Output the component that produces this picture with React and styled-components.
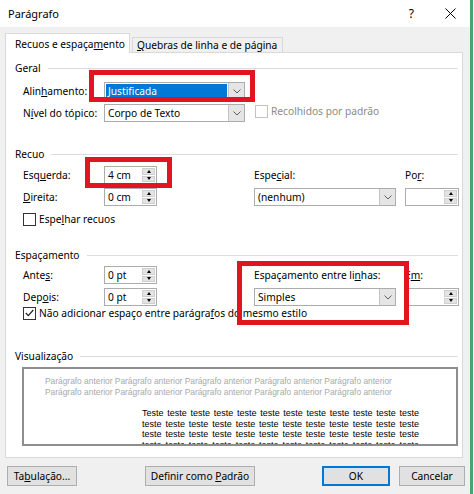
import React from 'react';
import styled, { createGlobalStyle } from 'styled-components';

const GlobalStyle = createGlobalStyle`
  html, body {
    margin: 0;
    padding: 0;
    background: #fff;
  }
  body {
    font-family: "Noto Sans", "Open Sans", sans-serif;
    font-size: 10.2px;
    color: #000;
  }
`;

const Window = styled.div`
  position: relative;
  width: 470px;
  height: 494px;
  background: #f0f0f0;
  border-right: 3px solid #4ea36a;
  display: flex;
  flex-direction: column;
  overflow: hidden;
`;

const TitleBar = styled.div`
  height: 27px;
  flex: none;
  background: #fff;
  display: flex;
  align-items: center;
  padding-left: 8px;
`;

const TitleText = styled.div`
  flex: 1;
  font-size: 11px;
`;

const HelpButton = styled.span`
  font-size: 12px;
  margin-right: 31px;
`;

const CloseButton = styled.span`
  display: flex;
  margin-right: 14px;
`;

const Body = styled.div`
  padding: 6px 0 0 5px;
  display: flex;
  flex-direction: column;
`;

const TabList = styled.div`
  display: flex;
  align-items: flex-end;
  height: 20px;
  margin-bottom: -1px;
  position: relative;
  z-index: 1;
`;

const Tab = styled.div`
  box-sizing: border-box;
  width: ${(p) => p.$width}px;
  height: ${(p) => (p.$active ? 20 : 15)}px;
  margin-bottom: ${(p) => (p.$active ? 0 : 1)}px;
  margin-left: ${(p) => (p.$active ? 0 : 2)}px;
  padding-left: ${(p) => (p.$active ? 9 : 4)}px;
  background: ${(p) => (p.$active ? '#fff' : '#f0f0f0')};
  border: 1px solid #d9d9d9;
  border-bottom: none;
  display: flex;
  align-items: center;
  white-space: nowrap;
`;

const Panel = styled.div`
  box-sizing: border-box;
  width: 458px;
  height: 406px;
  background: #fff;
  border: 1px solid #d9d9d9;
  padding: 8px 4px 0 9px;
`;

const SectionHeader = styled.div`
  display: flex;
  align-items: center;
  height: 14px;
  margin-top: ${(p) => p.$top || 0}px;

  &::after {
    content: '';
    flex: 1;
    height: 1px;
    background: #dcdcdc;
    margin-left: 7px;
  }
`;

const GeneralGrid = styled.div`
  display: grid;
  grid-template-columns: 81px 141px auto;
  grid-auto-rows: 18px;
  row-gap: 4px;
  margin: 7px 0 0 8px;
`;

const FormGrid = styled.div`
  display: grid;
  grid-template-columns: 81px 53px 97px 142px 9px 54px;
  grid-auto-rows: 18px;
  row-gap: 4px;
  margin: ${(p) => p.$top}px 0 0 8px;
`;

const FieldLabel = styled.span`
  display: flex;
  align-items: center;
  white-space: nowrap;
  grid-column: ${(p) => p.$col || 'auto'};
`;

const Key = styled.span`
  text-decoration: underline;
  text-underline-offset: 1px;
`;

const SelectBox = styled.div`
  box-sizing: border-box;
  height: 18px;
  border: 1px solid #acacac;
  background: #fff;
  display: flex;
  grid-column: ${(p) => p.$col || 'auto'};
`;

const SelectValue = styled.div`
  flex: 1;
  display: flex;
  align-items: center;
  margin: 1px;
  padding-left: 2px;
  background: ${(p) => (p.$selected ? '#0078d7' : 'transparent')};
  color: ${(p) => (p.$selected ? '#fff' : '#000')};
`;

const DropButton = styled.div`
  width: 15px;
  background: #e5e5e5;
  border-left: 1px solid #c4c4c4;
  display: flex;
  align-items: center;
  justify-content: center;
`;

const SpinBox = styled.div`
  box-sizing: border-box;
  height: 18px;
  border: 1px solid #acacac;
  background: #fff;
  display: flex;
  grid-column: ${(p) => p.$col || 'auto'};
`;

const SpinValue = styled.div`
  flex: 1;
  display: flex;
  align-items: center;
  padding-left: 3px;
`;

const SpinButtons = styled.div`
  width: 13px;
  padding: 1px;
  display: flex;
  flex-direction: column;
  gap: 1px;
`;

const SpinButton = styled.div`
  flex: 1;
  background: #e3e3e3;
  border: 1px solid #cfcfcf;
  display: flex;
  align-items: center;
  justify-content: center;

  &::before {
    content: '';
    border-left: 2.5px solid transparent;
    border-right: 2.5px solid transparent;
    ${(p) => (p.$down ? 'border-top' : 'border-bottom')}: 3px solid #000;
  }
`;

const CheckRow = styled.label`
  display: flex;
  align-items: center;
  gap: 3px;
  height: 14px;
  white-space: nowrap;
  margin: ${(p) => p.$top || 0}px 0 0 ${(p) => p.$left || 0}px;
  color: ${(p) => (p.$disabled ? '#8a8a8a' : '#000')};
`;

const CheckBox = styled.span`
  box-sizing: border-box;
  width: 13px;
  height: 13px;
  background: #fff;
  border: 1px solid ${(p) => (p.$disabled ? '#c3c3c3' : '#333')};
  display: flex;
  align-items: center;
  justify-content: center;
`;

const Preview = styled.div`
  box-sizing: border-box;
  width: 436px;
  height: 79px;
  margin: 4px 0 0 7px;
  border: 2px solid #8e8e8e;
  background: #fff;
  overflow: hidden;
  padding-top: 7px;
  font-family: "Liberation Sans", Arial, sans-serif;
`;

const PrevParagraph = styled.p`
  margin: 0;
  padding: 0 60px 0 21px;
  font-size: 8.4px;
  line-height: 11px;
  color: #a9a9a9;
`;

const CurrentParagraph = styled.p`
  margin: 10px 0 0;
  padding: 0 37px 0 118px;
  font-size: 9px;
  line-height: 10.5px;
  text-align: justify;
  color: #000;
`;

const ButtonBar = styled.div`
  display: flex;
  margin: 8px 0 0 2px;
`;

const Button = styled.button`
  box-sizing: border-box;
  width: ${(p) => p.$width}px;
  height: 20px;
  margin-left: ${(p) => p.$gap || 0}px;
  padding: 0;
  background: #e1e1e1;
  border: ${(p) => (p.$primary ? '2px solid #0078d7' : '1px solid #adadad')};
  font-family: inherit;
  font-size: 10.2px;
  color: #000;
`;

const Highlight = styled.div`
  position: absolute;
  left: ${(p) => p.$x}px;
  top: ${(p) => p.$y}px;
  width: ${(p) => p.$w}px;
  height: ${(p) => p.$h}px;
  box-sizing: border-box;
  border: 5px solid #e2141f;
  pointer-events: none;
`;

const Chevron = () => (
  <svg width="8" height="5" viewBox="0 0 8 5">
    <path d="M0.5 0.5 L4 4 L7.5 0.5" fill="none" stroke="#606060" strokeWidth="1" />
  </svg>
);

const Select = ({ value, selected, col }) => (
  <SelectBox $col={col}>
    <SelectValue $selected={selected}>{value}</SelectValue>
    <DropButton>
      <Chevron />
    </DropButton>
  </SelectBox>
);

const Spin = ({ value, col }) => (
  <SpinBox $col={col}>
    <SpinValue>{value}</SpinValue>
    <SpinButtons>
      <SpinButton />
      <SpinButton $down />
    </SpinButtons>
  </SpinBox>
);

const Check = ({ checked, disabled }) => (
  <CheckBox $disabled={disabled}>
    {checked && (
      <svg width="9" height="8" viewBox="0 0 9 8">
        <path d="M0.8 4 L3.3 6.6 L8.3 1" fill="none" stroke="#222" strokeWidth="1.2" />
      </svg>
    )}
  </CheckBox>
);

const teste = ('Teste ' + 'teste '.repeat(70)).trim();
const anterior = Array(10).fill('Parágrafo anterior').join(' ');

const App = () => {
  return (
    <>
      <GlobalStyle />
      <Window>
        <TitleBar>
          <TitleText>Parágrafo</TitleText>
          <HelpButton>?</HelpButton>
          <CloseButton>
            <svg width="11" height="11" viewBox="0 0 11 11">
              <path d="M0.5 0.5 L10.5 10.5 M10.5 0.5 L0.5 10.5" stroke="#000" strokeWidth="1" />
            </svg>
          </CloseButton>
        </TitleBar>

        <Body>
          <TabList>
            <Tab $active $width={125}>
              Recuos e espaça<Key>m</Key>ento
            </Tab>
            <Tab $width={151}>
              <Key>Q</Key>uebras de linha e de página
            </Tab>
          </TabList>

          <Panel>
            <SectionHeader>Geral</SectionHeader>
            <GeneralGrid>
              <FieldLabel>
                Alin<Key>h</Key>amento:
              </FieldLabel>
              <Select value="Justificada" selected />
              <span />
              <FieldLabel>
                N<Key>í</Key>vel do tópico:
              </FieldLabel>
              <Select value="Corpo de Texto" />
              <CheckRow $left={10} $disabled>
                <Check disabled />
                <span>Recolhidos por padrão</span>
              </CheckRow>
            </GeneralGrid>

            <SectionHeader $top={25}>Recuo</SectionHeader>
            <FormGrid $top={5}>
              <FieldLabel>
                Esq<Key>u</Key>erda:
              </FieldLabel>
              <Spin value="4 cm" />
              <FieldLabel $col="4">
                Espe<Key>c</Key>ial:
              </FieldLabel>
              <FieldLabel $col="6">
                Po<Key>r</Key>:
              </FieldLabel>
              <FieldLabel>
                <Key>D</Key>ireita:
              </FieldLabel>
              <Spin value="0 cm" />
              <Select value="(nenhum)" col="4" />
              <Spin value="" col="6" />
            </FormGrid>
            <CheckRow $top={6} $left={8}>
              <Check />
              <span>
                Espe<Key>l</Key>har recuos
              </span>
            </CheckRow>

            <SectionHeader $top={22}>Espaçamento</SectionHeader>
            <FormGrid $top={4}>
              <FieldLabel>
                Ante<Key>s</Key>:
              </FieldLabel>
              <Spin value="0 pt" />
              <FieldLabel $col="4">
                Espaçamento entre li<Key>n</Key>has:
              </FieldLabel>
              <FieldLabel $col="6">
                E<Key>m</Key>:
              </FieldLabel>
              <FieldLabel>
                Dep<Key>o</Key>is:
              </FieldLabel>
              <Spin value="0 pt" />
              <Select value="Simples" col="4" />
              <Spin value="" col="6" />
            </FormGrid>
            <CheckRow $top={0} $left={8}>
              <Check checked />
              <span>
                Não adicionar espaço entre parágra<Key>f</Key>os do mesmo estilo
              </span>
            </CheckRow>

            <SectionHeader $top={29}>Visualização</SectionHeader>
            <Preview>
              <PrevParagraph>{anterior}</PrevParagraph>
              <CurrentParagraph>{teste}</CurrentParagraph>
            </Preview>
          </Panel>

          <ButtonBar>
            <Button $width={70}>
              Ta<Key>b</Key>ulação...
            </Button>
            <Button $width={110} $gap={68}>
              Definir como <Key>P</Key>adrão
            </Button>
            <Button $width={68} $gap={67} $primary>
              OK
            </Button>
            <Button $width={66} $gap={9}>
              Cancelar
            </Button>
          </ButtonBar>
        </Body>

        <Highlight $x={89} $y={70} $w={166} $h={32} />
        <Highlight $x={85} $y={157} $w={87} $h={31} />
        <Highlight $x={237} $y={261} $w={172} $h={64} />
      </Window>
    </>
  );
};

export default App;
